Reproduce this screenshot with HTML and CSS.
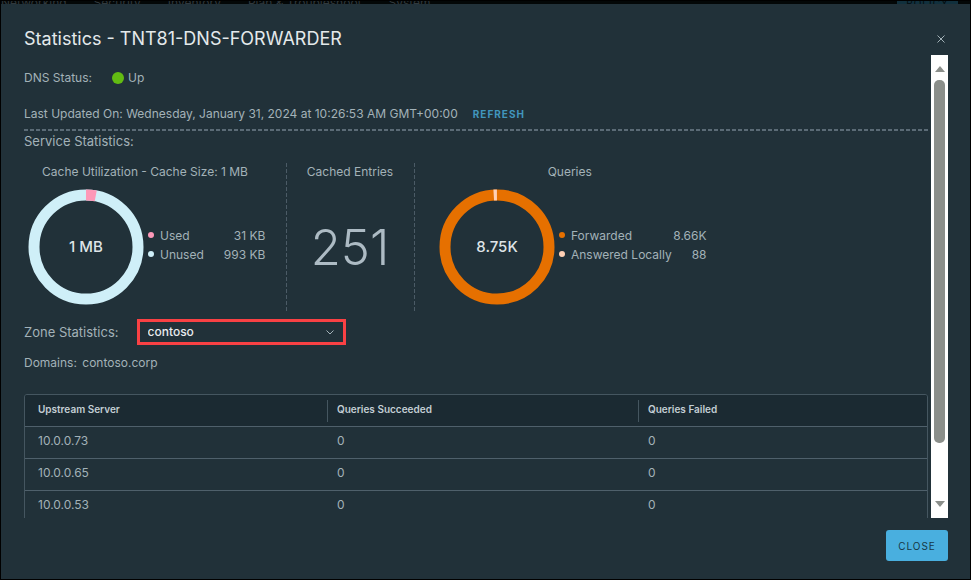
FILE: index.html
```html
<!DOCTYPE html>
<html lang="en">
<head>
<meta charset="utf-8">
<title>Statistics - TNT81-DNS-FORWARDER</title>
<link rel="stylesheet" href="styles.css">
</head>
<body>
<nav class="topbar">
  <a href="#">Networking</a>
  <a href="#">Security</a>
  <a href="#">Inventory</a>
  <a href="#">Plan &amp; Troubleshoot</a>
  <a href="#">System</a>
  <button class="mode" type="button">POLICY</button>
</nav>
<main class="modal" role="dialog" aria-labelledby="title">
  <header class="modal-head">
    <h1 id="title">Statistics - TNT81-DNS-FORWARDER</h1>
    <button class="dismiss" type="button" aria-label="Close dialog">
      <svg viewBox="0 0 8 8" width="8" height="8"><path d="M0.5 0.5 7.5 7.5M7.5 0.5 0.5 7.5"/></svg>
    </button>
  </header>
  <div class="modal-body">
    <div class="content">
      <p class="status"><span>DNS Status:</span><span class="state"><i class="dot up"></i>Up</span></p>
      <div class="updated">
        <span>Last Updated On: Wednesday, January 31, 2024 at 10:26:53 AM GMT+00:00</span>
        <button class="refresh" type="button">REFRESH</button>
      </div>
      <svg class="rule" width="100%" height="2"><line x1="0" y1="1" x2="100%" y2="1"/></svg>
      <h2>Service Statistics:</h2>
      <div class="stats">
        <section class="panel cache">
          <h3>Cache Utilization - Cache Size: 1 MB</h3>
          <div class="chart-row">
            <div class="donut">
              <svg viewBox="0 0 116 116"><circle class="unused" cx="58" cy="58" r="52"/><circle class="used" cx="58" cy="58" r="52" pathLength="1000" stroke-dasharray="30 970" transform="rotate(-90 58 58)"/></svg>
              <strong>1 MB</strong>
            </div>
            <ul class="legend">
              <li><i class="dot pink"></i><span>Used</span><b>31 KB</b></li>
              <li><i class="dot ice"></i><span>Unused</span><b>993 KB</b></li>
            </ul>
          </div>
        </section>
        <section class="panel entries">
          <h3>Cached Entries</h3>
          <p class="big">251</p>
        </section>
        <section class="panel queries">
          <h3>Queries</h3>
          <div class="chart-row">
            <div class="donut">
              <svg viewBox="0 0 116 116"><circle class="forwarded" cx="58" cy="58" r="52"/><circle class="local" cx="58" cy="58" r="52" pathLength="1000" stroke-dasharray="10 990" transform="rotate(-93.6 58 58)"/></svg>
              <strong>8.75K</strong>
            </div>
            <ul class="legend">
              <li><i class="dot orange"></i><span>Forwarded</span><b>8.66K</b></li>
              <li><i class="dot peach"></i><span>Answered Locally</span><b>88</b></li>
            </ul>
          </div>
        </section>
      </div>
      <div class="zone">
        <label for="zone">Zone Statistics:</label>
        <div class="picker">
          <select id="zone"><option>contoso</option></select>
          <svg viewBox="0 0 8 5" width="8" height="5"><path d="M0.5 0.5 4 4 7.5 0.5"/></svg>
        </div>
      </div>
      <p class="domains">Domains: <span>contoso.corp</span></p>
      <div class="grid">
        <table>
          <colgroup><col class="c1"><col class="c2"><col></colgroup>
          <thead><tr><th scope="col">Upstream Server</th><th scope="col">Queries Succeeded</th><th scope="col">Queries Failed</th></tr></thead>
          <tbody>
            <tr><td>10.0.0.73</td><td>0</td><td>0</td></tr>
            <tr><td>10.0.0.65</td><td>0</td><td>0</td></tr>
            <tr><td>10.0.0.53</td><td>0</td><td>0</td></tr>
          </tbody>
        </table>
      </div>
    </div>
    <div class="scrollbar" aria-hidden="true">
      <svg viewBox="0 0 10 6" width="10" height="6"><path d="M5 0 10 6H0z"/></svg>
      <div class="track"><div class="thumb"></div></div>
      <svg viewBox="0 0 10 6" width="10" height="6"><path d="M0 0H10L5 6z"/></svg>
    </div>
  </div>
  <footer class="modal-foot"><button class="close" type="button">CLOSE</button></footer>
</main>
</body>
</html>
```

FILE: styles.css
```css
* { box-sizing: border-box; }
body {
  margin: 0;
  height: 100vh;
  padding: 1px;
  display: flex;
  flex-direction: column;
  background: #000;
  color: #a3b2b8;
  font: 12px/20px Inter, "Open Sans", sans-serif;
}
h1, h2, h3, p, ul { margin: 0; padding: 0; font-weight: 400; }
button, select { font: inherit; cursor: pointer; }
.topbar {
  flex: none;
  display: flex;
  align-items: center;
  height: 3px;
  gap: 27px;
  padding-right: 12px;
  overflow: hidden;
  background: #030707;
  line-height: 12px;
}
.topbar a { color: #30383c; text-decoration: none; white-space: nowrap; }
.mode {
  margin-left: auto;
  width: 61px;
  height: 12px;
  padding: 0;
  border: 0;
  background: #11303d;
  color: #040b0e;
  font-size: 10px;
  line-height: 12px;
  letter-spacing: 1px;
}
.modal {
  flex: 1;
  min-height: 0;
  display: flex;
  flex-direction: column;
  padding: 0 22px 18px 23px;
  background: #213139;
}
.modal-head {
  flex: none;
  display: flex;
  justify-content: space-between;
  align-items: center;
  height: 51px;
  padding-top: 19px;
}
h1 { font-size: 18px; line-height: 24px; color: #e4e9eb; }
.dismiss { display: flex; padding: 3px; border: 0; background: none; }
.dismiss path { fill: none; stroke: #a3b2b8; stroke-width: 1; }
.modal-body { flex: 1; min-height: 0; display: flex; gap: 3px; }
.content { flex: 1; min-width: 0; overflow: hidden; padding-top: 13px; }
.dot { flex: none; width: 6px; height: 6px; border-radius: 50%; }
.status { display: flex; gap: 20px; }
.state { display: flex; align-items: center; gap: 4px; }
.up { width: 12px; height: 12px; background: #62bb12; }
.updated { display: flex; align-items: center; gap: 15px; margin-top: 16px; padding-bottom: 5px; }
.refresh {
  padding: 0;
  border: 0;
  background: none;
  color: #4196bd;
  font-size: 10px;
  font-weight: 700;
  letter-spacing: 1px;
}
.rule { display: block; }
.rule line { stroke: #5b6b76; stroke-width: 2; stroke-dasharray: 4 2; }
h2, .zone label { font-size: 13px; line-height: 20px; }
.stats { display: flex; height: 150px; margin-top: 12px; }
.panel { display: flex; flex-direction: column; }
.panel + .panel {
  background: repeating-linear-gradient(#4b5b66 0 4px, transparent 4px 6px) left / 1px 100% no-repeat;
}
.cache { width: 262px; }
.entries { width: 128px; }
h3 { font-size: 12px; line-height: 18px; text-align: center; }
.cache h3 { padding-right: 20px; }
.queries { padding-left: 25px; }
.queries h3 { padding-right: 6px; }
.chart-row { display: flex; align-items: center; gap: 4px; margin: 8px 0 0 4px; }
.queries .chart-row { margin-left: 0; }
.donut { display: grid; place-items: center; width: 116px; height: 116px; }
.donut > * { grid-area: 1 / 1; }
.donut circle { fill: none; stroke-width: 11; }
.donut strong { font-size: 15px; font-weight: 500; color: #dfe4e7; }
.unused { stroke: #cfeff8; }
.used { stroke: #fd98b8; }
.forwarded { stroke: #e67000; }
.local { stroke: #ffd0b5; }
.legend { list-style: none; padding-bottom: 5px; line-height: 19px; }
.legend li { display: flex; align-items: center; gap: 6px; }
.legend span { flex: 1; margin-right: 14px; }
.legend b { font-weight: 400; }
.pink { background: #fd98b8; }
.ice { background: #cfeff8; }
.orange { background: #e67000; }
.peach { background: #ffd0b5; }
.big { flex: 1; font-size: 49px; line-height: 134px; font-weight: 300; text-align: center; color: #adbbc4; }
.zone { display: flex; align-items: center; gap: 18px; margin-top: 6px; }
.picker { display: grid; align-items: center; width: 209px; height: 26px; border: 3px solid #f94144; }
.picker > * { grid-area: 1 / 1; }
.picker select {
  width: 100%;
  height: 20px;
  padding: 0 8px;
  border: 0;
  appearance: none;
  background: none;
  color: #e9ecef;
  font-weight: 500;
}
.picker svg { justify-self: end; margin-right: 9px; pointer-events: none; }
.picker path { fill: none; stroke: #a3b2b8; }
.domains { margin-top: 8px; }
.domains span { margin-left: 2px; }
.grid { margin-top: 21px; border: 1px solid #455660; border-radius: 3px; overflow: hidden; }
table { width: 100%; border-collapse: separate; border-spacing: 0; table-layout: fixed; }
.c1 { width: 302px; }
.c2 { width: 311px; }
th, td { height: 32px; padding: 0 10px 4px; text-align: left; }
th {
  height: 31px;
  background: #1b2a32 linear-gradient(#455660, #455660) left center / 1px 22px no-repeat;
  color: #c3ced4;
  font-size: 10px;
  font-weight: 600;
}
th:first-child, td:first-child { padding-left: 13px; }
th:first-child { background-image: none; }
td { border-top: 1px solid #4f606b; }
.scrollbar {
  flex: none;
  display: flex;
  flex-direction: column;
  align-items: center;
  gap: 8px;
  width: 17px;
  padding: 11px 0;
  background: #fff;
}
.scrollbar path { fill: #8b8f8b; }
.track { flex: 1; width: 11px; }
.thumb { height: 88%; border-radius: 5px; background: #8b8f8b; }
.modal-foot { flex: none; display: flex; justify-content: flex-end; padding-top: 12px; }
.close {
  width: 62px;
  height: 31px;
  padding: 0;
  border: 0;
  border-radius: 3px;
  background: #49afdf;
  color: #173846;
  font-size: 10px;
  letter-spacing: 1px;
}
```
